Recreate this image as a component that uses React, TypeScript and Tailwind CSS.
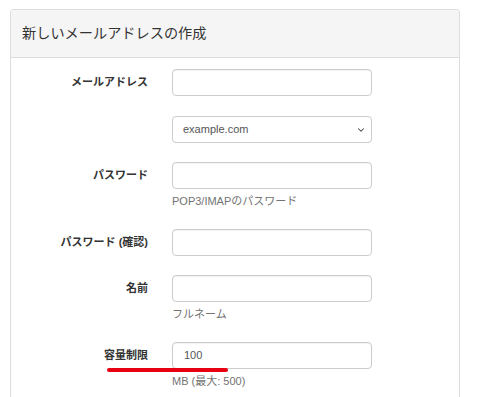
import { ChevronDown } from 'lucide-react';
import type { ReactNode } from 'react';

const font = { fontFamily: '"Liberation Sans", "Noto Sans CJK JP", sans-serif' };

function Row({ label, children, help, className = '' }: { label?: ReactNode; children: ReactNode; help?: string; className?: string }) {
  return (
    <div className={`flex items-start gap-6 ${className}`}>
      <div className="w-[137px] h-[27px] flex items-center justify-end text-[11px] font-bold text-[#333]">
        {label}
      </div>
      <div className="w-[200px]">
        {children}
        {help && <div className="mt-1 h-4 leading-4 text-[11px] text-[#737373]">{help}</div>}
      </div>
    </div>
  );
}

function TextInput({ value = '' }: { value?: string }) {
  return (
    <div className="h-[27px] w-full rounded-[4px] border border-[#ccc] bg-white px-[11px] flex items-center text-[11px] text-[#555] shadow-[inset_0_1px_1px_rgba(0,0,0,0.05)]">
      {value}
    </div>
  );
}

export default function App() {
  return (
    <div className="min-h-[397px] bg-white pt-[9px] pl-[10px] overflow-hidden" style={font}>
      <div className="w-[450px] h-[400px] border border-[#ddd] rounded-t-[3px]">
        {/* Header */}
        <div className="h-[48px] bg-[#f5f5f5] border-b border-[#ddd] flex items-center pl-[11px] text-[14.2px] text-[#333]">
          新しいメールアドレスの作成
        </div>

        {/* Body */}
        <div className="pt-[11px]">
          <Row label="メールアドレス" className="mb-[20px]">
            <TextInput />
          </Row>
          <Row className="mb-[19px]">
            <div className="h-[27px] w-full rounded-[4px] border border-[#ccc] bg-white pl-[10px] pr-[5px] flex items-center justify-between text-[11px] text-[#555]">
              <span>example.com</span>
              <ChevronDown className="h-[10px] w-[10px] text-[#444]" strokeWidth={2.5} />
            </div>
          </Row>
          <Row label="パスワード" help="POP3/IMAPのパスワード" className="mb-[20px]">
            <TextInput />
          </Row>
          <Row label="パスワード (確認)" className="mb-[19px]">
            <TextInput />
          </Row>
          <Row label="名前" help="フルネーム" className="mb-[20px]">
            <TextInput />
          </Row>
          <div className="relative">
            <Row label="容量制限" help="MB (最大: 500)">
              <TextInput value="100" />
            </Row>
            <div className="absolute left-[96px] top-[26px] h-[4px] w-[121px] rounded-full bg-[#e60012]" />
          </div>
        </div>
      </div>
    </div>
  );
}
